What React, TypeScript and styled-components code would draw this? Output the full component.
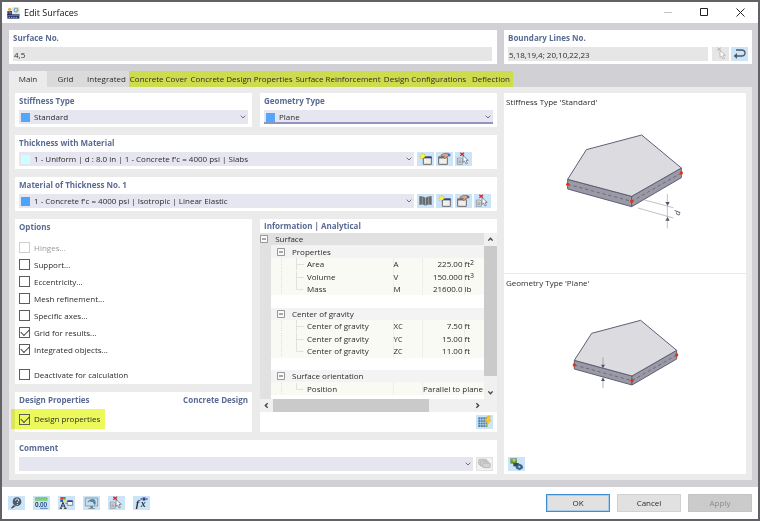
import React, { useId } from "react";
import styled, { createGlobalStyle, css } from "styled-components";

const color = {
  heading: "#5a6b93",
  text: "#2b2b2b",
  field: "#e6e6e6",
  select: "#e6e6f1",
  tool: "#cbe4f7",
  page: "#ebebeb",
  body: "#d0d0d5",
  highlight: "#ecf95c",
};

const GlobalStyle = createGlobalStyle`
  * { box-sizing: border-box; }
  html, body, #root { height: 100%; }
  body {
    margin: 0;
    background: #626266;
    color: ${color.text};
    font: 8px/12px "Open Sans", "Noto Sans", sans-serif;
  }
  button, input, select { font: inherit; color: inherit; margin: 0; padding: 0; border: 0; border-radius: 0; }
  svg { display: block; }
`;

/* ---------- window frame ---------- */

const Desktop = styled.div`
  min-height: 100%;
  display: flex;
  padding: 2px;
`;

const Dialog = styled.main`
  flex: 1;
  min-width: 0;
  display: flex;
  flex-direction: column;
  background: #fff;
`;

const TitleBar = styled.header`
  display: flex;
  align-items: center;
  height: 21px;
  padding-left: 5px;
`;

const Title = styled.h1`
  flex: 1;
  margin: 0 0 0 4px;
  font-size: 9px;
  font-weight: 400;
  color: #111;
`;

const WindowButton = styled.button`
  width: 36px;
  height: 21px;
  display: flex;
  align-items: center;
  justify-content: center;
  background: none;
`;

const Body = styled.div`
  flex: 1;
  display: flex;
  flex-direction: column;
  padding: 7px 6px 7px 7px;
  background: ${color.body};
`;

const Columns = styled.div<{ $side: number }>`
  display: grid;
  grid-template-columns: minmax(0, 1fr) ${(p) => p.$side}px;
  gap: 7px;
`;

/* ---------- panels and fields ---------- */

const Panel = styled.section`
  min-width: 0;
  padding: 0 4px 3px;
  background: #fff;
`;

const PanelHead = styled.div`
  display: flex;
  justify-content: space-between;
  align-items: center;
  height: 17px;
  padding-bottom: 2px;
`;

const Heading = styled.h2`
  margin: 0;
  font-size: 8px;
  font-weight: 700;
  color: ${color.heading};
`;

const FieldRow = styled.div`
  display: flex;
  gap: 3px;
`;

const TextField = styled.input`
  flex: 1;
  min-width: 0;
  height: 14px;
  margin-right: 1px;
  padding-left: 1px;
  background: ${color.field};
`;

const SelectBox = styled.div<{ $focused?: boolean }>`
  flex: 1;
  min-width: 0;
  height: 14px;
  display: flex;
  align-items: center;
  padding: 0 2px;
  background: ${color.select};
  ${(p) => p.$focused && css`box-shadow: inset 0 -2px 0 #9393bf;`}
`;

const Swatch = styled.span<{ $color: string }>`
  width: 9px;
  height: 9px;
  margin-right: 4px;
  background: ${(p) => p.$color};
`;

const Select = styled.select`
  flex: 1;
  min-width: 0;
  height: 14px;
  appearance: none;
  background: none;
  outline: none;
`;

const ToolButton = styled.button<{ $disabled?: boolean }>`
  width: 17px;
  height: 14px;
  flex: none;
  background: ${(p) => (p.$disabled ? color.field : color.tool)};
`;

const ToolGroup = styled.div<{ $reserve?: boolean }>`
  display: flex;
  gap: 2px;
  ${(p) => p.$reserve && css`width: 76px;`}
`;

/* ---------- tabs ---------- */

const TabBar = styled.div`
  display: flex;
  height: 16px;
  margin-top: 7px;
`;

const Tab = styled.button<{ $width: number; $active?: boolean }>`
  width: ${(p) => p.$width}px;
  height: 16px;
  text-align: center;
  white-space: nowrap;
  background: ${(p) => (p.$active ? color.page : "#dadada")};
`;

const MarkedTabs = styled.div`
  display: flex;
  height: 17px;
  background: #cedb4c;

  ${Tab} { background: none; }
`;

const TabPage = styled.div`
  flex: 1;
  display: grid;
  padding: 6px;
  background: ${color.page};
`;

const Stack = styled.div`
  display: flex;
  flex-direction: column;
  gap: 8px;
  min-width: 0;
`;

const Halves = styled.div<{ $grow?: boolean }>`
  display: grid;
  grid-template-columns: minmax(0, 1fr) minmax(0, 1fr);
  gap: 8px;
  ${(p) => p.$grow && css`flex: 1;`}
`;

/* ---------- options ---------- */

const GrowPanel = styled(Panel)`
  flex: 1;
  padding-bottom: 1px;
`;

const CheckList = styled.div`
  display: flex;
  flex-direction: column;
  padding-top: 3px;
`;

const CheckLabel = styled.label<{ $muted?: boolean; $apart?: boolean }>`
  display: flex;
  align-items: center;
  gap: 4px;
  height: 17px;
  white-space: nowrap;
  color: ${(p) => (p.$muted ? "#9a9a9a" : "inherit")};
  ${(p) => p.$apart && css`margin-top: 8px;`}
`;

const MarkedCheck = styled.div`
  width: 94px;
  height: 20px;
  display: flex;
  align-items: center;
  margin-left: -8px;
  padding-left: 8px;
  background: ${color.highlight};
  mix-blend-mode: multiply;
`;

const Check = styled.input`
  appearance: none;
  width: 11px;
  height: 11px;
  display: grid;
  place-items: center;
  border: 1px solid #5c5c5c;

  &:disabled { border-color: #cfcfcf; }

  &:checked::before {
    content: "";
    width: 7px;
    height: 4px;
    margin-bottom: 2px;
    border: solid #444;
    border-width: 0 0 1px 1px;
    transform: rotate(-45deg);
  }
`;

/* ---------- information table ---------- */

const InfoPanel = styled.section`
  display: flex;
  flex-direction: column;
  min-width: 0;
  background: #fff;
`;

const InfoHead = styled(PanelHead)`
  height: 14px;
  padding: 0 4px;
`;

const InfoView = styled.div`
  display: grid;
  grid-template-columns: minmax(0, 1fr) 13px;
  height: 166px;
  background: linear-gradient(to right, #e1e1e1 11px, #fff 11px);
`;

const InfoTable = styled.table`
  width: 100%;
  height: 162px;
  table-layout: fixed;
  border-collapse: collapse;
  line-height: 12px;

  td { padding: 0; white-space: nowrap; }
`;

const Gutter = styled.td`
  background: #e1e1e1;
`;

const Row = styled.tr<{ $kind: "root" | "group" | "item" | "blank" }>`
  background: ${(p) =>
    ({ root: "#e1e1e1", group: "#f3f3f4", item: "#f9faf4", blank: "#fff" })[p.$kind]};
`;

const Cell = styled.td<{ $right?: boolean; $lined?: boolean }>`
  text-align: ${(p) => (p.$right ? "right" : "left")};
  ${(p) => p.$lined && css`border-left: 1px solid #efefea;`}

  sup { font-size: 7px; line-height: 0; vertical-align: 2px; }
  small { font-size: 7px; line-height: 0; }
`;

const Value = styled.span`
  margin-right: 1px;
`;

const TreeLabel = styled.div`
  display: flex;
  align-items: center;
  height: 12px;
`;

const VScroll = styled.div`
  display: flex;
  flex-direction: column;
  align-items: center;
  background: #f0f0f0;
`;

const VThumb = styled.div`
  width: 100%;
  flex: 1;
  margin-bottom: 10px;
  background: #cacaca;
`;

const HScroll = styled.div`
  display: flex;
  align-items: center;
  height: 13px;
  padding-right: 13px;
  background: #f0f0f0;
`;

const HTrack = styled.div`
  flex: 1;
  height: 13px;
`;

const HThumb = styled.div`
  width: 79%;
  height: 13px;
  background: #cacaca;
`;

const ScrollButton = styled.button`
  width: 13px;
  height: 13px;
  display: grid;
  place-items: center;
  background: none;
`;

const InfoFoot = styled.div`
  display: flex;
  justify-content: flex-end;
  margin-top: auto;
  padding: 0 4px 3px;
`;

/* ---------- preview ---------- */

const Preview = styled.aside`
  display: grid;
  grid-template-rows: 180fr 202fr;
  background: #fff;
`;

const PreviewPart = styled.figure<{ $divided?: boolean }>`
  display: flex;
  flex-direction: column;
  margin: 0;
  padding: 3px 2px;
  ${(p) => p.$divided && css`border-top: 1px solid #ebebeb;`}

  > svg { align-self: center; }
  > button { margin: auto 0 0 2px; }
`;

const Caption = styled.figcaption<{ $space: number }>`
  margin-bottom: ${(p) => p.$space}px;
`;

/* ---------- footer ---------- */

const Footer = styled.footer`
  display: flex;
  align-items: center;
  justify-content: space-between;
  height: 32px;
  padding: 0 6px;
`;

const FooterTools = styled.div`
  display: flex;
  gap: 8px;
`;

const FooterActions = styled.div`
  display: flex;
  gap: 7px;
`;

const ActionButton = styled.button<{ $primary?: boolean }>`
  width: 64px;
  height: 18px;
  background: #e1e1e1;
  border: 1px solid #d2d2d2;
  ${(p) => p.$primary && css`border-color: #3f8fd0; box-shadow: inset 0 0 0 1px #a5cdee;`}

  &:disabled { background: #cbcbcb; border-color: #c4c4c4; color: #8b8b8b; }
`;

/* ---------- icons ---------- */

const Icon = ({ children }: { children: React.ReactNode }) => (
  <svg width="17" height="14" viewBox="0 0 51 42" fill="none" aria-hidden="true">
    {children}
  </svg>
);

const AppIcon = () => (
  <svg width="13" height="12" viewBox="0 0 39 36" aria-hidden="true">
    <path d="M14 1h24v20H14z" fill="#dce8ee" />
    <circle cx="27" cy="9" r="6" fill="none" stroke="#5b9bb8" strokeWidth="3" />
    <path d="M27 9l6 5" stroke="#d6b13a" strokeWidth="3" />
    <circle cx="8" cy="7" r="5" fill="#d9b24a" />
    <path d="M1 12h14v12H1z" fill="#2d3f86" />
    <path d="M6 13l6 7" stroke="#d9b24a" strokeWidth="3" />
    <path d="M0 22h38v4H0z" fill="#1c2756" />
    <path d="M1 27h36v8H1z" fill="#26346f" />
    <path d="M5 31h28" stroke="#fff" strokeWidth="2" strokeDasharray="4 3" />
  </svg>
);

const Chevron = () => (
  <svg width="6" height="4" viewBox="0 0 18 12" fill="none" aria-hidden="true">
    <path d="M2 2l7 7 7-7" stroke="#707078" strokeWidth="3" />
  </svg>
);

const Arrow = ({ turn }: { turn: number }) => (
  <svg width="7" height="7" viewBox="0 0 21 21" fill="none" aria-hidden="true">
    <path d="M4 14l6.500-7 6.500 7" stroke="#404040" strokeWidth="4" transform={`rotate(${turn} 10.5 10.5)`} />
  </svg>
);

const PickIcon = ({ muted }: { muted?: boolean }) => (
  <Icon>
    {!muted && (
      <g stroke="#7c8490" strokeWidth="2">
        <path d="M7 18h11l4 4v15H7z" fill="#dfe2e6" />
        <path d="M10 24h7M10 28h9M10 32h9" />
      </g>
    )}
    <path
      d="M24 11v20l5-4 4 9 4-2-4-9h7z"
      fill="#fff"
      stroke={muted ? "#a5a5a5" : "#5c6068"}
      strokeWidth="2"
    />
    <path d="M16 2l11 9M27 2l-11 9" stroke={muted ? "#9c9c9c" : "#e21f2d"} strokeWidth={muted ? 2 : 4} />
  </Icon>
);

const ReturnIcon = () => (
  <Icon>
    <path d="M15 9h16q11 0 11 9t-11 9H14" stroke="#4c5866" strokeWidth="4" />
    <path d="M18 18l-10 9 10 8z" fill="#4c5866" />
  </Icon>
);

const NewIcon = () => (
  <Icon>
    <path d="M19 16h24v21H19z" fill="#f1efe9" stroke="#6a6a72" strokeWidth="3" />
    <path d="M18 13h26v6H18z" fill="#35408e" />
    <path d="M17 3v20M7 13h20M10 6l14 14M24 6L10 20" stroke="#b5ab22" strokeWidth="2" />
    <circle cx="17" cy="13" r="6" fill="#fff22e" />
  </Icon>
);

const EditIcon = () => (
  <Icon>
    <path d="M8 17h26v20H8z" fill="#f1efe9" stroke="#6a6a72" strokeWidth="3" />
    <path d="M7 13h22v6H7z" fill="#6a6a72" />
    <path d="M15 9l10-5h12l2 7-7 4-5 5-4-3 2-4h-9z" fill="#d8a589" stroke="#7f5948" strokeWidth="2" />
    <path d="M35 5h8v8h-6z" fill="#4770a8" />
  </Icon>
);

const BookIcon = () => (
  <Icon>
    <path d="M7 7q11-2 18 4v24q-8-6-18-2zM44 7q-11-2-18 4v24q8-6 18-2z" fill="#676b70" />
    <path d="M16 6v26M35 6v26M25.500 11v24" stroke="#a9b1b8" strokeWidth="2" />
  </Icon>
);

const RecalcIcon = () => (
  <Icon>
    <path d="M7 7h27v29H7z" fill="#477aa9" />
    <path d="M7 14h27M7 22h27M7 29h27M14 7v29M21 7v29M28 7v29" stroke="#c1dced" strokeWidth="2" />
    <path d="M34 3h9l-4 11h6L30 35l4-15h-6z" fill="#ffcc1e" stroke="#ca9412" strokeWidth="1" />
  </Icon>
);

const CommentIcon = () => (
  <Icon>
    <path d="M2 2h47v38H2z" fill="#f4f4f4" stroke="#e0e0e0" strokeWidth="3" />
    <g fill="#d3d3d3" stroke="#a8a8a8" strokeWidth="2">
      <rect x="8" y="7" width="24" height="16" rx="3" />
      <rect x="13" y="12" width="24" height="16" rx="3" />
      <rect x="20" y="18" width="23" height="14" rx="3" />
    </g>
  </Icon>
);

const ImageIcon = () => (
  <Icon>
    <path d="M7 4h20v16H7z" fill="#5f9a3d" />
    <path d="M7 4h20v6H7z" fill="#78a7bd" />
    <circle cx="18" cy="10" r="4" fill="#e5c436" />
    <path d="M16 18h16v10H16z" fill="#365047" />
    <path d="M24 26l8-5 10 4 2 8-9 5-10-4z" fill="#3d6a98" stroke="#244565" strokeWidth="2" />
    <circle cx="34" cy="29" r="3" fill="#b8d4ec" />
  </Icon>
);

const HelpIcon = () => (
  <Icon>
    <path d="M17 27L9 35l2 3 12-7z" fill="#4d5966" />
    <circle cx="27" cy="17" r="13" fill="#4d5966" />
    <path d="M22 14q1-6 6-5 6 1 4 6-5 3-4 6M28 24v3" stroke="#d7ebf8" strokeWidth="3" />
  </Icon>
);

const UnitsIcon = () => (
  <Icon>
    <rect x="6" y="4" width="38" height="11" fill="#86cf86" />
    <path d="M10 4v4M15 4v4M20 4v4M25 4v4M30 4v4M35 4v4M40 4v4" stroke="#58a45b" strokeWidth="2" />
    <text x="6" y="34" fontSize="19" fontWeight="600" fontFamily="Noto Sans" fill="#30363c">0.</text>
    <text x="21" y="34" fontSize="19" fontWeight="600" fontFamily="Noto Sans" fill="#244e92">00</text>
    <path d="M21 37h23" stroke="#244e92" strokeWidth="2" />
  </Icon>
);

const DisplayIcon = () => (
  <Icon>
    <path d="M7 3h8v8H7z" fill="#e53b31" />
    <path d="M15 3h8v8h-8z" fill="#3eaa45" />
    <path d="M7 11h8v7H7z" fill="#3152c2" />
    <path d="M15 11h8v7h-8z" fill="#efe038" />
    <path d="M8 36l7-17 7 17M10 30h10M5 37h7M18 37h8" stroke="#343434" strokeWidth="3" />
    <path d="M28 15h16v13H28z" fill="#f6f6f6" stroke="#51617a" strokeWidth="2" />
    <path d="M28 13h16v5H28z" fill="#35408e" />
    <path d="M22 22h6" stroke="#51617a" strokeWidth="2" />
  </Icon>
);

const MonitorIcon = () => (
  <Icon>
    <path d="M7 6h37v24H7z" fill="#c9dcea" stroke="#71818f" strokeWidth="2" />
    <path d="M22 30h8v6h6v2H16v-2h6z" fill="#71818f" />
    <path d="M13 17q8-9 17-8 9 2 8 15l-4 3-5-10-5 2-3-4-5 4z" fill="#4f83ab" />
  </Icon>
);

const FormulaIcon = () => (
  <Icon>
    <text x="8" y="33" fontSize="33" fontStyle="italic" fontWeight="700" fontFamily="Liberation Serif" fill="#2b3443">f</text>
    <text x="23" y="34" fontSize="30" fontStyle="italic" fontWeight="700" fontFamily="Liberation Serif" fill="#2b3443">x</text>
    <path d="M22 9q11-9 22 0-11 9-22 0z" fill="#dfe9ff" stroke="#303f91" strokeWidth="2" />
    <circle cx="33" cy="9" r="4" fill="#303f91" />
  </Icon>
);

const Expander = () => (
  <svg width="8" height="8" viewBox="0 0 8 8" aria-hidden="true">
    <path d="M.5.5h7v7h-7z" fill="#fafafa" stroke="#979797" />
    <path d="M2 4h4" stroke="#555" />
  </svg>
);

const GroupLead = () => (
  <svg width="21" height="12" viewBox="0 0 21 12" aria-hidden="true">
    <path d="M6.500 2.500h7v7h-7z" fill="#fafafa" stroke="#979797" />
    <path d="M8 6h4" stroke="#555" />
  </svg>
);

const ItemLead = ({ last }: { last?: boolean }) => (
  <svg width="36" height="12" viewBox="0 0 36 12" fill="none" aria-hidden="true">
    <path d="M10.500 0v12" stroke="#dededa" strokeDasharray="1 1" />
    <path d={last ? "M25.500 0v6.500h7" : "M25.500 0v12M26 6.500h7"} stroke="#e2e2dc" />
  </svg>
);

const SlabDrawing = () => (
  <svg width="122" height="100" viewBox="195 60 366 300" fill="none" role="img" aria-label="Plate with thickness d">
    <g stroke="#625f76" strokeWidth="3" strokeLinejoin="round">
      <path d="M206 205L398 256V287L206 234z" fill="#9a99a6" />
      <path d="M398 256L547 171V200L398 287z" fill="#9a99a6" />
      <path d="M206 205L262 116 428 72 547 171 398 256z" fill="#dcdbe0" />
    </g>
    <path d="M206 220L398 271 547 186" stroke="#56536a" strokeWidth="2" strokeDasharray="10 8" />
    <g fill="#dd3512">
      <circle cx="206" cy="220" r="5" />
      <circle cx="398" cy="271" r="5" />
      <circle cx="547" cy="186" r="5" />
    </g>
    <path d="M436 267L523 290M417 291L523 321M505 249v103" stroke="#a3a2ab" strokeWidth="2" />
    <path d="M499 273h13l-6 11zM499 329h13l-6-11z" fill="#565267" />
    <text x="542" y="314" transform="rotate(-80 542 314)" fontSize="24" fontStyle="italic" fontFamily="Noto Sans" fill="#565267">d</text>
  </svg>
);

const PlaneDrawing = () => (
  <svg width="111" height="72" viewBox="210 140 333 216" fill="none" role="img" aria-label="Plane surface">
    <g stroke="#625f76" strokeWidth="3" strokeLinejoin="round">
      <path d="M223 267L396 314V341L223 293z" fill="#9a99a6" />
      <path d="M396 314L530 237V263L396 341z" fill="#9a99a6" />
      <path d="M223 267L275 186 422 147 530 237 396 314z" fill="#dcdbe0" />
    </g>
    <path d="M223 281L396 328 530 251" stroke="#56536a" strokeWidth="2" strokeDasharray="10 8" />
    <g fill="#dd3512">
      <circle cx="223" cy="281" r="5" />
      <circle cx="396" cy="328" r="5" />
      <circle cx="530" cy="251" r="5" />
    </g>
    <path d="M309 258v24M309 328v22" stroke="#8d8b98" strokeWidth="2" />
    <path d="M303 280h12l-6 11zM303 329h12l-6-11z" fill="#565267" />
  </svg>
);

/* ---------- composed parts ---------- */

type PickerProps = {
  title: string;
  value: string;
  swatch?: string;
  focused?: boolean;
  reserve?: boolean;
  children?: React.ReactNode;
};

const Picker = ({ title, value, swatch, focused, reserve, children }: PickerProps) => {
  const id = useId();
  return (
    <Panel>
      <PanelHead>
        <Heading><label htmlFor={id}>{title}</label></Heading>
      </PanelHead>
      <FieldRow>
        <SelectBox $focused={focused}>
          {swatch && <Swatch $color={swatch} />}
          <Select id={id} defaultValue={value}>
            <option>{value}</option>
          </Select>
          <Chevron />
        </SelectBox>
        {children && <ToolGroup $reserve={reserve}>{children}</ToolGroup>}
      </FieldRow>
    </Panel>
  );
};

const Tool = ({ label, children, disabled }: { label: string; children: React.ReactNode; disabled?: boolean }) => (
  <ToolButton type="button" aria-label={label} disabled={disabled} $disabled={disabled}>
    {children}
  </ToolButton>
);

const options = [
  { label: "Hinges...", disabled: true },
  { label: "Support..." },
  { label: "Eccentricity..." },
  { label: "Mesh refinement..." },
  { label: "Specific axes..." },
  { label: "Grid for results...", checked: true },
  { label: "Integrated objects...", checked: true },
  { label: "Deactivate for calculation", apart: true },
];

type Item = { name: string; symbol: React.ReactNode; value: string; unit?: React.ReactNode };

const groups: { name: string; items: Item[] }[] = [
  {
    name: "Properties",
    items: [
      { name: "Area", symbol: "A", value: "225.00", unit: <>ft<sup>2</sup></> },
      { name: "Volume", symbol: "V", value: "150.000", unit: <>ft<sup>3</sup></> },
      { name: "Mass", symbol: "M", value: "21600.0", unit: "lb" },
    ],
  },
  {
    name: "Center of gravity",
    items: [
      { name: "Center of gravity", symbol: <>X<small>C</small></>, value: "7.50", unit: "ft" },
      { name: "Center of gravity", symbol: <>Y<small>C</small></>, value: "15.00", unit: "ft" },
      { name: "Center of gravity", symbol: <>Z<small>C</small></>, value: "11.00", unit: "ft" },
    ],
  },
  {
    name: "Surface orientation",
    items: [{ name: "Position", symbol: "", value: "Parallel to plane" }],
  },
];

const Information = () => (
  <InfoPanel>
    <InfoHead><Heading>Information | Analytical</Heading></InfoHead>
    <InfoView>
      <InfoTable>
        <colgroup>
          <col width="11" />
          <col />
          <col width="29" />
          <col width="42" />
          <col width="20" />
        </colgroup>
        <tbody>
          <Row $kind="root">
            <Gutter><Expander /></Gutter>
            <Cell colSpan={4}>&nbsp; Surface</Cell>
          </Row>
          {groups.map((group, g) => (
            <React.Fragment key={group.name}>
              <Row $kind="group">
                <Gutter />
                <Cell colSpan={4}><TreeLabel><GroupLead />{group.name}</TreeLabel></Cell>
              </Row>
              {group.items.map((item, i) => (
                <Row $kind="item" key={i}>
                  <Gutter />
                  <Cell><TreeLabel><ItemLead last={i === group.items.length - 1} />{item.name}</TreeLabel></Cell>
                  <Cell $lined>{item.symbol}</Cell>
                  <Cell $lined $right colSpan={item.unit ? 1 : 2}><Value>{item.value}</Value></Cell>
                  {item.unit && <Cell $lined>{item.unit}</Cell>}
                </Row>
              ))}
              {g < groups.length - 1 && (
                <Row $kind="blank"><Gutter /><Cell colSpan={4}>&nbsp;</Cell></Row>
              )}
            </React.Fragment>
          ))}
        </tbody>
      </InfoTable>
      <VScroll>
        <ScrollButton type="button" aria-label="Scroll up"><Arrow turn={0} /></ScrollButton>
        <VThumb />
        <ScrollButton type="button" aria-label="Scroll down"><Arrow turn={180} /></ScrollButton>
      </VScroll>
    </InfoView>
    <HScroll>
      <ScrollButton type="button" aria-label="Scroll left"><Arrow turn={-90} /></ScrollButton>
      <HTrack><HThumb /></HTrack>
      <ScrollButton type="button" aria-label="Scroll right"><Arrow turn={90} /></ScrollButton>
    </HScroll>
    <InfoFoot><Tool label="Recalculate"><RecalcIcon /></Tool></InfoFoot>
  </InfoPanel>
);

export default function App() {
  return (
    <>
      <GlobalStyle />
      <Desktop>
        <Dialog aria-label="Edit Surfaces">
          <TitleBar>
            <AppIcon />
            <Title>Edit Surfaces</Title>
            <WindowButton type="button" aria-label="Minimize" disabled>
              <svg width="9" height="9"><path d="M0 4.500h8" stroke="#c4c4c4" /></svg>
            </WindowButton>
            <WindowButton type="button" aria-label="Maximize">
              <svg width="9" height="9"><path d="M.5.5h7v7h-7z" fill="none" stroke="#222" /></svg>
            </WindowButton>
            <WindowButton type="button" aria-label="Close">
              <svg width="9" height="9"><path d="M.5.5l8 8M8.500.5l-8 8" stroke="#222" /></svg>
            </WindowButton>
          </TitleBar>

          <Body>
            <Columns $side={248}>
              <Panel>
                <PanelHead><Heading><label htmlFor="surface-no">Surface No.</label></Heading></PanelHead>
                <FieldRow><TextField id="surface-no" defaultValue="4,5" /></FieldRow>
              </Panel>
              <Panel>
                <PanelHead><Heading><label htmlFor="lines-no">Boundary Lines No.</label></Heading></PanelHead>
                <FieldRow>
                  <TextField id="lines-no" defaultValue="5,18,19,4; 20,10,22,23" />
                  <ToolGroup>
                    <Tool label="Pick lines" disabled><PickIcon muted /></Tool>
                    <Tool label="Reverse orientation"><ReturnIcon /></Tool>
                  </ToolGroup>
                </FieldRow>
              </Panel>
            </Columns>

            <TabBar role="tablist">
              <Tab role="tab" aria-selected $width={38} $active>Main</Tab>
              <Tab role="tab" $width={37}>Grid</Tab>
              <Tab role="tab" $width={45}>Integrated</Tab>
              <MarkedTabs role="presentation">
                <Tab role="tab" $width={59}>Concrete Cover</Tab>
                <Tab role="tab" $width={107}>Concrete Design Properties</Tab>
                <Tab role="tab" $width={86}>Surface Reinforcement</Tab>
                <Tab role="tab" $width={88}>Design Configurations</Tab>
                <Tab role="tab" $width={44}>Deflection</Tab>
              </MarkedTabs>
            </TabBar>

            <TabPage role="tabpanel">
              <Columns $side={242}>
                <Stack>
                  <Halves>
                    <Picker title="Stiffness Type" value="Standard" swatch="#55a5fb" />
                    <Picker title="Geometry Type" value="Plane" swatch="#55a5fb" focused />
                  </Halves>
                  <Picker
                    title="Thickness with Material"
                    value="1 - Uniform | d : 8.0 in | 1 - Concrete f'c = 4000 psi | Slabs"
                    swatch="#ccffff"
                    reserve
                  >
                    <Tool label="New thickness"><NewIcon /></Tool>
                    <Tool label="Edit thickness"><EditIcon /></Tool>
                    <Tool label="Pick thickness"><PickIcon /></Tool>
                  </Picker>
                  <Picker
                    title="Material of Thickness No. 1"
                    value="1 - Concrete f'c = 4000 psi | Isotropic | Linear Elastic"
                    swatch="#4da2fb"
                    reserve
                  >
                    <Tool label="Material library"><BookIcon /></Tool>
                    <Tool label="New material"><NewIcon /></Tool>
                    <Tool label="Edit material"><EditIcon /></Tool>
                    <Tool label="Pick material"><PickIcon /></Tool>
                  </Picker>
                  <Halves $grow>
                    <Stack>
                      <GrowPanel>
                        <PanelHead><Heading>Options</Heading></PanelHead>
                        <CheckList>
                          {options.map((o) => (
                            <CheckLabel key={o.label} $muted={o.disabled} $apart={o.apart}>
                              <Check type="checkbox" defaultChecked={o.checked} disabled={o.disabled} />
                              {o.label}
                            </CheckLabel>
                          ))}
                        </CheckList>
                      </GrowPanel>
                      <Panel>
                        <PanelHead>
                          <Heading>Design Properties</Heading>
                          <Heading>Concrete Design</Heading>
                        </PanelHead>
                        <MarkedCheck>
                          <CheckLabel>
                            <Check type="checkbox" defaultChecked />
                            Design properties
                          </CheckLabel>
                        </MarkedCheck>
                      </Panel>
                    </Stack>
                    <Information />
                  </Halves>
                  <Picker title="Comment" value="">
                    <Tool label="Saved comments" disabled><CommentIcon /></Tool>
                  </Picker>
                </Stack>

                <Preview>
                  <PreviewPart>
                    <Caption $space={23}>Stiffness Type 'Standard'</Caption>
                    <SlabDrawing />
                  </PreviewPart>
                  <PreviewPart $divided>
                    <Caption $space={29}>Geometry Type 'Plane'</Caption>
                    <PlaneDrawing />
                    <Tool label="Show rendered image"><ImageIcon /></Tool>
                  </PreviewPart>
                </Preview>
              </Columns>
            </TabPage>
          </Body>

          <Footer>
            <FooterTools>
              <Tool label="Help"><HelpIcon /></Tool>
              <Tool label="Units and decimal places"><UnitsIcon /></Tool>
              <Tool label="Display properties"><DisplayIcon /></Tool>
              <Tool label="View"><MonitorIcon /></Tool>
              <Tool label="Pick surface"><PickIcon /></Tool>
              <Tool label="Formulas"><FormulaIcon /></Tool>
            </FooterTools>
            <FooterActions>
              <ActionButton type="button" $primary>OK</ActionButton>
              <ActionButton type="button">Cancel</ActionButton>
              <ActionButton type="button" disabled>Apply</ActionButton>
            </FooterActions>
          </Footer>
        </Dialog>
      </Desktop>
    </>
  );
}
